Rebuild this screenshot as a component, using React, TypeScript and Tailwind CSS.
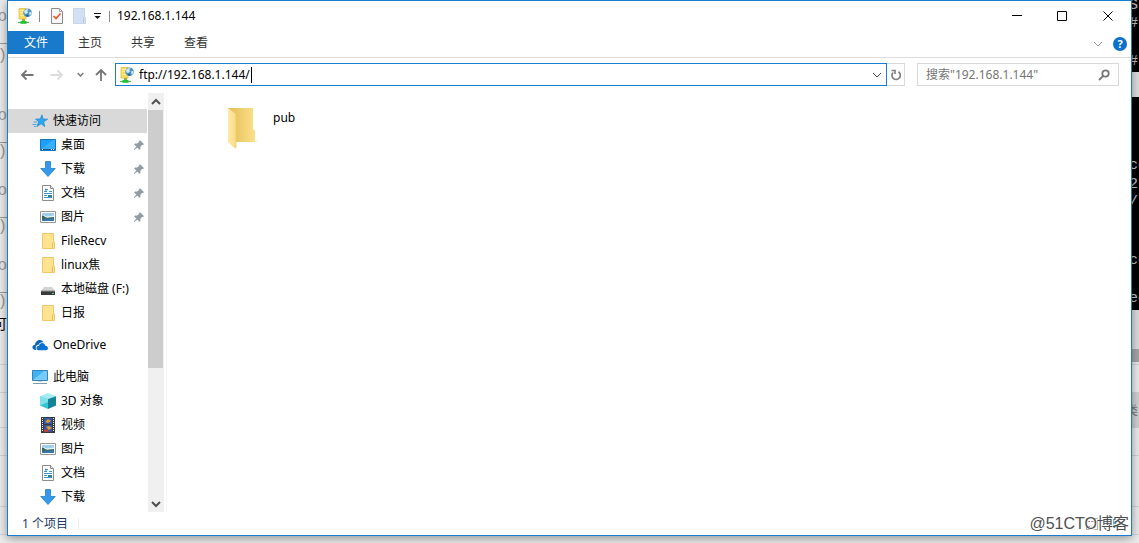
import { useState } from "react";
import type { ReactNode } from "react";

function ServerIcon() {
  return (
    <svg viewBox="0 0 16 16" className="size-4 shrink-0" aria-hidden="true">
      <path d="M1 .5h7v10.500H1z" fill="#f9dd62" stroke="#e3bc3c" strokeWidth=".8" />
      <path d="M2 2.500h4M2 4.500h3M2 7.500h4" stroke="#fff3b0" strokeWidth=".8" />
      <path d="M4 11h3v2.500H4z" fill="#8fb33a" />
      <path d="M0 14.500h11" stroke="#5fae62" strokeWidth="1.200" />
      <path d="M2.500 13h6v2.800h-6z" fill="#22c531" />
      <circle cx="9.600" cy="4.800" r="4.300" fill="#4f93bf" />
      <path d="M6 3.200c1-1.800 3-2.200 4.600-1.800L9.200 3l1 1.200-2 1.800-1.600-.600zM11 4.600l2.400-.8.2 2.300-1.800 1.600z" fill="#cfeaf6" />
      <path d="M7.500 7l2.500-.200.600 1.400-1.500.8z" fill="#255f93" />
    </svg>
  );
}

function StarIcon() {
  return (
    <svg viewBox="0 0 16 16" className="size-4 shrink-0" aria-hidden="true">
      <path d="M10 1.800l1 4.200 4.600.2-3.900 2.600 1 4.700-3.600-2.800-4.200 2.800 1.700-4.600L3.800 6h4.400z" fill="#2ba7f2" stroke="#1f83c9" strokeWidth=".7" />
      <path d="M3 6.500h2M1.500 9h3.500M.5 11.500h4M2 13.500h2" stroke="#4aa8e4" strokeWidth="1" />
    </svg>
  );
}

function DesktopIcon() {
  return (
    <svg viewBox="0 0 16 16" className="size-4 shrink-0" aria-hidden="true">
      <path d="M.5 2.500h15v11H.5z" fill="#1ba1fb" stroke="#1676c4" />
      <path d="M1 12L13 3h2v9z" fill="#38b0ff" />
      <path d="M1 12.500h14" stroke="#0b5f9f" />
      <path d="M2 12.500h1M11 12.500h1M13 12.500h1" stroke="#fff" />
    </svg>
  );
}

function DownloadIcon() {
  return (
    <svg viewBox="0 0 16 16" className="size-4 shrink-0" aria-hidden="true">
      <path d="M5.500.5h5v7h4.800L8 15.500.7 7.500h4.800z" fill="#3597e8" stroke="#2480c9" strokeWidth=".8" />
    </svg>
  );
}

function DocumentIcon() {
  return (
    <svg viewBox="0 0 16 16" className="size-4 shrink-0" aria-hidden="true">
      <path d="M2.500.5h8l3 3v12h-11z" fill="#fff" stroke="#8c8c8c" />
      <path d="M10.500.5v3h3" fill="#e4e4e4" stroke="#8c8c8c" />
      <path d="M5 4.500h3M4 6.500h3M9 6.500h3M4 8.500h8M4 10.500h3M4 12.500h8" stroke="#3a9bd6" />
      <path d="M6 3.500v3" stroke="#2d7fb8" />
      <path d="M8 10h4v2H8z" fill="#3f7a80" />
    </svg>
  );
}

function PictureIcon() {
  return (
    <svg viewBox="0 0 16 16" className="size-4 shrink-0" aria-hidden="true">
      <path d="M.5 2.500h15v11H.5z" fill="#fff" stroke="#979797" />
      <path d="M2 4h12v8H2z" fill="#9fcdf0" />
      <path d="M2 5.500l5 2 7-1V9H2z" fill="#e2f2f8" />
      <path d="M2 6.500c2 0 3 2 5 2.200l7-.7v2H2z" fill="#35684f" />
      <path d="M2 10l12-1v3H2z" fill="#3778a8" />
    </svg>
  );
}

function FolderIcon() {
  return (
    <svg viewBox="0 0 16 16" className="size-4 shrink-0" aria-hidden="true">
      <path d="M2.500.500h11v8.500h1v6.500h-12z" fill="#ffe391" stroke="#ecc964" />
      <path d="M12.500 9.500v5.500" stroke="#e6c25c" />
    </svg>
  );
}

function DriveIcon() {
  return (
    <svg viewBox="0 0 16 16" className="size-4 shrink-0" aria-hidden="true">
      <path d="M4 6h8l3 4H1z" fill="#d4d4d4" />
      <path d="M1 10h14v4H1z" fill="#3b3b3d" />
      <path d="M1 10h14" stroke="#8d8d8d" />
      <path d="M12 12.500h2" stroke="#4ee06b" />
    </svg>
  );
}

function CloudIcon() {
  return (
    <svg viewBox="0 0 16 16" className="size-4 shrink-0" aria-hidden="true">
      <path d="M3.500 13C-.5 13-.6 8 3 7.700 3.500 2.500 9.500 1.500 11.500 5.200 8.500 4.800 7 6.300 6.500 7.700 3.800 7.800 3 10.500 4.300 13z" fill="#0a64b8" />
      <path d="M6.500 13.200c-3-.2-2.700-4.500.5-4.500C7.600 5.200 12.500 5 13.200 8.700c3.300-.1 3.600 4.400.8 4.500z" fill="#0873d2" />
    </svg>
  );
}

function ComputerIcon() {
  return (
    <svg viewBox="0 0 16 16" className="size-4 shrink-0" aria-hidden="true">
      <path d="M.5 1.500h15v10H.5z" fill="#3fb1f7" stroke="#3a82b5" />
      <path d="M1 11L12 2h3v9z" fill="#75cbff" />
      <path d="M1 14.500h14" stroke="#7d9aae" />
      <path d="M6 12.500h4" stroke="#c5d2da" />
    </svg>
  );
}

function CubeIcon() {
  return (
    <svg viewBox="0 0 16 16" className="size-4 shrink-0" aria-hidden="true">
      <path d="M0 3.200L8 0l8 3.200L8 6z" fill="#a5edf3" />
      <path d="M0 3.200L8 6v10l-8-3.600z" fill="#31c5d5" />
      <path d="M16 3.200L8 6v10l8-3.600z" fill="#128399" />
      <path d="M0 3.200L8 6v3L0 12.400z" fill="#7fe0e8" />
    </svg>
  );
}

function VideoIcon() {
  return (
    <svg viewBox="0 0 16 16" className="size-4 shrink-0" aria-hidden="true">
      <path d="M1 0h14v16H1z" fill="#3a3a3e" />
      <path d="M2.500 1v14M13.500 1v14" stroke="#eee" strokeWidth="1" strokeDasharray="1 1" />
      <path d="M4 1h8v6H4zM4 8h8v7H4z" fill="#3757a5" />
      <path d="M5 5l3-3 3 2-3 2zM6 10l3-1 3 2-3 2z" fill="#df9b35" />
      <path d="M4 13l3-1 2 3H4z" fill="#bd4235" />
    </svg>
  );
}

function PinIcon() {
  return (
    <svg viewBox="0 0 12 12" className="size-3 shrink-0" aria-hidden="true">
      <path d="M6.800 1l4.300 4.300-1.200.6-.6-.2-2 2 .2 2.300-1 .800-2.300-2.300L1.400 11l-.6-.5 2.700-2.900-2.300-2.200.9-1 2.300.2 2-2-.200-.600z" fill="#8e9ba5" />
    </svg>
  );
}

function Chevron({ up = false, className = "" }: { up?: boolean; className?: string }) {
  return (
    <svg viewBox="0 0 10 10" className={"size-[10px] shrink-0 " + className} fill="none" stroke="currentColor" aria-hidden="true">
      <path d={up ? "M1 7l4-4 4 4" : "M1 3l4 4 4-4"} />
    </svg>
  );
}

type Entry = { label: string; icon: ReactNode; pinned?: boolean };

const quickAccess: Entry[] = [
  { label: "桌面", icon: <DesktopIcon />, pinned: true },
  { label: "下载", icon: <DownloadIcon />, pinned: true },
  { label: "文档", icon: <DocumentIcon />, pinned: true },
  { label: "图片", icon: <PictureIcon />, pinned: true },
  { label: "FileRecv", icon: <FolderIcon /> },
  { label: "linux焦", icon: <FolderIcon /> },
  { label: "本地磁盘 (F:)", icon: <DriveIcon /> },
  { label: "日报", icon: <FolderIcon /> },
];

const computer: Entry[] = [
  { label: "3D 对象", icon: <CubeIcon /> },
  { label: "视频", icon: <VideoIcon /> },
  { label: "图片", icon: <PictureIcon /> },
  { label: "文档", icon: <DocumentIcon /> },
  { label: "下载", icon: <DownloadIcon /> },
];

function Root({ label, icon, selected = false }: Entry & { selected?: boolean }) {
  return (
    <button className={"mr-px flex h-6 items-center gap-[5px] pl-6 text-left " + (selected ? "bg-[#d9d9d9]" : "")}>
      {icon}
      {label}
    </button>
  );
}

function Child({ label, icon, pinned }: Entry) {
  return (
    <button className="mr-px flex h-6 items-center gap-[5px] pr-[2px] pl-8 text-left whitespace-nowrap">
      {icon}
      <span className="flex-1">{label}</span>
      {pinned && <PinIcon />}
    </button>
  );
}

const leftText = [
  { t: "o", c: "top-[7px]" },
  { t: "_", c: "top-[28px]" },
  { t: "=)", c: "top-[46px]" },
  { t: "o", c: "top-[106px]" },
  { t: "_", c: "top-[127px]" },
  { t: "=)", c: "top-[142px]" },
  { t: "o", c: "top-[181px]" },
  { t: "_", c: "top-[202px]" },
  { t: "=)", c: "top-[217px]" },
  { t: "o", c: "top-[256px]" },
  { t: "_", c: "top-[277px]" },
  { t: "=)", c: "top-[292px]" },
];

const terminalText = [
  { t: "S", c: "top-[-4px]" },
  { t: "#", c: "top-[14px]" },
  { t: "#", c: "top-[52px]" },
  { t: "co", c: "top-[156px]" },
  { t: "2", c: "top-[175px]" },
  { t: "/-", c: "top-[193px]" },
  { t: "co", c: "top-[251px]" },
  { t: "ec", c: "top-[289px]" },
];

function Backdrop() {
  return (
    <div className="absolute inset-0 overflow-hidden bg-[#ebebeb]" aria-hidden="true">
      <div className="flex flex-col">
        <div className="h-[364px]" />
        <div className="h-7 border-t border-[#d2d2d2]" />
        <div className="h-[35px] border-t border-[#d2d2d2]" />
        <div className="h-7 border-t border-[#d2d2d2]" />
        <div className="h-[51px] border-t border-[#d2d2d2]" />
        <div className="h-7 border-t border-[#d2d2d2]" />
        <div className="h-7 border-t border-[#d2d2d2]" />
      </div>
      <div className="absolute top-0 left-0 h-full w-[7px] overflow-hidden font-['Liberation_Mono',monospace] text-base leading-5 text-[#999]">
        {leftText.map((l, i) => (
          <span key={i} className={"absolute right-0 " + l.c}>{l.t}</span>
        ))}
        <span className="absolute top-[313px] right-0 font-['Noto_Sans_CJK_SC',sans-serif] text-sm leading-5 text-black">可</span>
      </div>
      <div className="absolute top-0 right-0 flex h-full w-[7px] flex-col overflow-hidden font-['Liberation_Mono',monospace] text-[15px] leading-5 text-[#c4c4c4]">
        <div className="h-[72px] bg-black" />
        <div className="h-[25px] bg-[#dedede]" />
        <div className="h-[213px] bg-black" />
        <div className="h-[39px] bg-[#dcdcdc]" />
        <div className="h-[13px] bg-[#a6a6a6]" />
        <div className="h-[30px]" />
        <div className="h-[36px] bg-[#d0d0d0]" />
        {terminalText.map((l, i) => (
          <span key={i} className={"absolute left-[-3px] " + l.c}>{l.t}</span>
        ))}
        <span className="absolute top-[400px] left-[-6px] font-['Noto_Sans_CJK_SC',sans-serif] text-xs leading-5 text-[#777]">类</span>
      </div>
    </div>
  );
}

export default function App() {
  const [address, setAddress] = useState("ftp://192.168.1.144/");
  return (
    <div className="relative flex h-screen min-h-[543px] flex-col overflow-hidden px-[7px] pb-[7px] font-['Noto_Sans','Noto_Sans_CJK_SC',sans-serif] text-xs leading-4 text-black">
      <Backdrop />
      <main className="relative flex flex-1 flex-col border border-[#1a7dcd] bg-white shadow-[0_2px_9px_rgba(0,0,0,0.4)]">
        <header className="flex h-[30px] items-center pl-[10px]">
          <ServerIcon />
          <span className="ml-[5px] h-[11px] w-px bg-[#8a8a8a]" />
          <button aria-label="属性" className="ml-[10px]">
            <svg viewBox="0 0 14 16" className="h-4 w-[14px]" fill="none" aria-hidden="true">
              <path d="M1.500.500h8l3 3v12h-11z" fill="#f7f7f7" stroke="#8a8a8a" />
              <path d="M9.500.500v3h3" stroke="#a5a5a5" />
              <path d="M3.500 8l2.500 2.500 4.500-5" stroke="#e8572a" strokeWidth="1.600" />
            </svg>
          </button>
          <button aria-label="新建文件夹" className="ml-2">
            <svg viewBox="0 0 14 16" className="h-4 w-[14px]" aria-hidden="true">
              <path d="M1.500.500h11v9h1v6h-12z" fill="#d3e0f4" stroke="#c6d5ea" />
              <path d="M11.500 9.500v5.500" stroke="#b7c8e0" />
            </svg>
          </button>
          <button aria-label="自定义快速访问工具栏" className="ml-[7px]">
            <svg viewBox="0 0 9 8" className="h-2 w-[9px]" aria-hidden="true">
              <path d="M1 1.500h7" stroke="#111" />
              <path d="M1.500 4h6L4.500 7z" fill="#111" />
            </svg>
          </button>
          <span className="ml-[7px] h-[11px] w-px bg-[#8a8a8a]" />
          <h1 className="ml-[7px] flex-1">192.168.1.144</h1>
          <button aria-label="最小化" className="flex h-full w-[46px] items-center justify-center">
            <svg viewBox="0 0 11 11" className="size-[11px]" aria-hidden="true"><path d="M0 4.500h10" stroke="#000" /></svg>
          </button>
          <button aria-label="最大化" className="flex h-full w-[45px] items-center justify-center">
            <svg viewBox="0 0 11 11" className="size-[11px]" fill="none" aria-hidden="true"><path d="M.5.500h9v9h-9z" stroke="#000" /></svg>
          </button>
          <button aria-label="关闭" className="flex h-full w-[46px] items-center justify-center">
            <svg viewBox="0 0 11 11" className="size-[11px]" aria-hidden="true"><path d="M.5.500l9 9M9.500.500l-9 9" stroke="#000" /></svg>
          </button>
        </header>

        <div className="flex h-[27px] items-start border-b border-[#dcdcdc] text-[#333]">
          <button className="h-[23px] w-14 bg-[#1979ca] pt-px text-white">文件</button>
          <button className="ml-px h-[23px] px-[13px] pt-px">主页</button>
          <button className="ml-[3px] h-[23px] px-[13px] pt-px">共享</button>
          <button className="ml-[3px] h-[23px] px-[13px] pt-px">查看</button>
          <div className="ml-auto flex h-[26px] items-center gap-[10px] pr-1">
            <button aria-label="展开功能区"><Chevron className="text-[#999]" /></button>
            <button aria-label="帮助" className="flex size-[14px] items-center justify-center rounded-full bg-[#0b71cd] text-[11px] leading-[14px] font-bold text-white">?</button>
          </div>
        </div>

        <div className="flex h-[33px] items-center pr-3 pl-3 text-[#666]">
          <button aria-label="后退">
            <svg viewBox="0 0 14 12" className="h-3 w-[14px]" fill="none" stroke="#757575" strokeWidth="1.800" aria-hidden="true"><path d="M13.500 6H2M6.500 1.500L2 6l4.500 4.500" /></svg>
          </button>
          <button aria-label="前进" className="ml-4">
            <svg viewBox="0 0 14 12" className="h-3 w-[14px]" fill="none" stroke="#dcdcdc" strokeWidth="1.800" aria-hidden="true"><path d="M.5 6H12M7.500 1.500L12 6l-4.500 4.500" /></svg>
          </button>
          <button aria-label="最近浏览的位置" className="ml-[13px]">
            <svg viewBox="0 0 7 6" className="h-[6px] w-[7px]" fill="none" stroke="#808080" strokeWidth="1.600" aria-hidden="true"><path d="M.7 1l2.800 3L6.300 1" /></svg>
          </button>
          <button aria-label="上移" className="ml-[10px]">
            <svg viewBox="0 0 14 14" className="size-[14px]" fill="none" stroke="#757575" strokeWidth="1.800" aria-hidden="true"><path d="M7 13V2M2 7l5-5 5 5" /></svg>
          </button>
          <div className="ml-[7px] flex h-[23px] flex-1 items-center border border-[#1a7dcd] pr-1 pl-1 text-black">
            <ServerIcon />
            <input aria-label="地址" value={address} onChange={(e) => setAddress(e.target.value)} className="ml-[3px] field-sizing-content outline-none" />
            <span className="ml-px h-4 w-px bg-black" />
            <button aria-label="以前的位置" className="ml-auto"><Chevron className="text-[#444]" /></button>
          </div>
          <button aria-label="刷新" className="flex h-[23px] w-[18px] items-center justify-center border border-l-0 border-[#d9d9d9]">
            <svg viewBox="0 0 12 12" className="size-3" fill="none" stroke="#808080" strokeWidth="1.700" aria-hidden="true"><path d="M8.500 2.800A4.200 4.200 0 1 1 3 3.500M1.500 1.500H5V5" /></svg>
          </button>
          <div className="ml-3 flex h-[23px] w-[202px] items-center border border-[#d9d9d9] pr-2 pl-2">
            <input aria-label="搜索" placeholder={'搜索"192.168.1.144"'} className="min-w-0 flex-1 outline-none placeholder:text-[#757575]" />
            <svg viewBox="0 0 12 12" className="size-3" fill="none" stroke="#757575" strokeWidth="1.800" aria-hidden="true"><circle cx="7.500" cy="4.500" r="3.200" /><path d="M5.200 6.800L1 11" /></svg>
          </div>
        </div>

        <div className="flex flex-1 pt-[2px]">
          <nav className="flex w-[140px] flex-col pt-4">
            <Root label="快速访问" icon={<StarIcon />} selected />
            {quickAccess.map((e) => <Child key={e.label} {...e} />)}
            <div className="mt-2 flex flex-col"><Root label="OneDrive" icon={<CloudIcon />} /></div>
            <div className="mt-2 flex flex-col"><Root label="此电脑" icon={<ComputerIcon />} /></div>
            {computer.map((e) => <Child key={e.label} {...e} />)}
          </nav>
          <div className="flex w-4 flex-col bg-[#f0f0f0] text-[#505050]">
            <button aria-label="向上滚动" className="flex h-[17px] items-center justify-center"><Chevron up className="stroke-2" /></button>
            <div className="mr-px flex-[258] bg-[#cdcdcd]" />
            <div className="flex-[127]" />
            <button aria-label="向下滚动" className="flex h-[17px] items-center justify-center"><Chevron className="stroke-2" /></button>
          </div>
          <section className="ml-[2px] flex-1 border-l border-[#f7f7f7] pt-[13px] pl-[60px]">
            <a href="#pub" className="flex w-60 items-start gap-3">
              <svg viewBox="0 0 34 44" className="h-11 w-[34px] shrink-0" aria-hidden="true">
                <defs>
                  <linearGradient id="folderBack" x1="0" x2="1"><stop offset="0" stopColor="#e5bd53" /><stop offset="1" stopColor="#fbe08a" /></linearGradient>
                  <linearGradient id="folderFront" x1="0" x2="1"><stop offset="0" stopColor="#ffe9a6" /><stop offset="1" stopColor="#f9dc87" /></linearGradient>
                </defs>
                <path d="M27 35.500l4-1.500-1 2z" fill="#ececec" />
                <path d="M4 41l6-2v2z" fill="#f0f0f0" />
                <path d="M1 2h25v21l2 2v11H1z" fill="url(#folderBack)" />
                <path d="M1 2l8 6v34l-1 .5L1 36z" fill="url(#folderFront)" />
                <path d="M9 8v34" stroke="#eac86e" strokeWidth=".6" />
              </svg>
              <span className="mt-1">pub</span>
            </a>
          </section>
        </div>

        <footer className="flex h-[23px] items-center justify-between pr-[2px] pl-[14px] text-[#1d3c66]">
          <div className="flex items-center gap-[10px]">
            <span>1 个项目</span>
            <span className="h-3 w-px bg-[#ebebeb]" />
          </div>
          <div className="relative flex h-full items-center gap-[14px] pr-[5px]">
            <button aria-label="详细信息">
              <svg viewBox="0 0 12 12" className="size-3" fill="none" aria-hidden="true"><path d="M.5.500h11v11H.5z" stroke="#aaa" /><path d="M2 3.500h2M2 8.500h2" stroke="#c55" /><path d="M5 3.500h5M5 8.500h5" stroke="#999" /></svg>
            </button>
            <button aria-label="大图标">
              <svg viewBox="0 0 12 12" className="size-3" aria-hidden="true"><path d="M1 1h10v9H1z" fill="#6aaad4" /><path d="M1 7l4-3 6 4v2H1z" fill="#3f705e" /></svg>
            </button>
            <span className="absolute top-0 right-0 font-['Liberation_Sans','Noto_Sans_CJK_SC',sans-serif] text-base leading-6 whitespace-nowrap text-[#505050] [text-shadow:1px_1px_0_#fff,-1px_-1px_0_#fff]">@51CTO博客</span>
          </div>
        </footer>
      </main>
    </div>
  );
}
